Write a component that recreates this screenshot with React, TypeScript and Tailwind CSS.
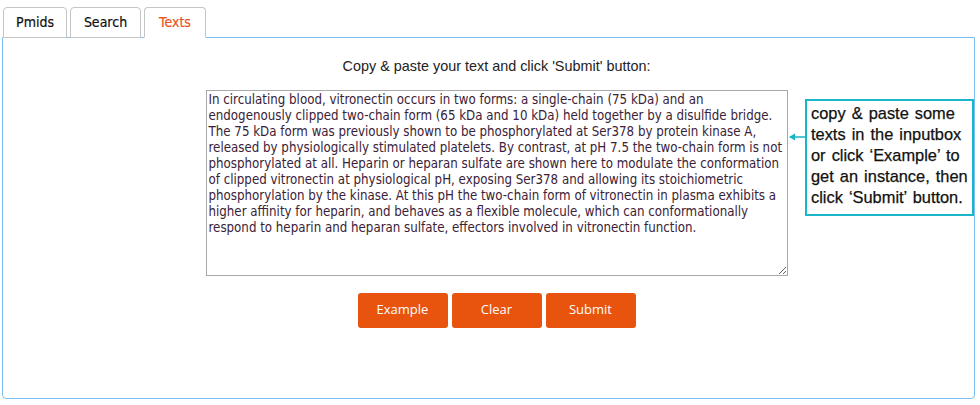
import React from "react";

const sample =
  "In circulating blood, vitronectin occurs in two forms: a single-chain (75 kDa) and an endogenously clipped two-chain form (65 kDa and 10 kDa) held together by a disulfide bridge. The 75 kDa form was previously shown to be phosphorylated at Ser378 by protein kinase A, released by physiologically stimulated platelets. By contrast, at pH 7.5 the two-chain form is not phosphorylated at all. Heparin or heparan sulfate are shown here to modulate the conformation of clipped vitronectin at physiological pH, exposing Ser378 and allowing its stoichiometric phosphorylation by the kinase. At this pH the two-chain form of vitronectin in plasma exhibits a higher affinity for heparin, and behaves as a flexible molecule, which can conformationally respond to heparin and heparan sulfate, effectors involved in vitronectin function.";

const tabs = [
  { label: "Pmids", w: "w-[64px]" },
  { label: "Search", w: "w-[71px]" },
  { label: "Texts", w: "w-[62px]" },
];

const hint = [
  "copy & paste some",
  "texts in the inputbox",
  "or click ‘Example’ to",
  "get an instance, then",
  "click ‘Submit’ button.",
];

export default function App() {
  return (
    <div className="w-[980px] h-[405px] bg-white pl-[2px] pt-[7px] font-['DejaVu_Sans_Condensed',sans-serif]">
      <div className="flex gap-[3px] pl-[1px] relative z-10">
        {tabs.map((t) => (
          <div
            key={t.label}
            className={`${t.w} h-[31px] flex items-center justify-center text-[14px] border border-[#c5c5c5] rounded-t-[4px] bg-white [-webkit-text-stroke:0.2px_currentColor] ${
              t.label === "Texts" ? "text-[#e8541c] border-b-white" : "text-[#111]"
            }`}
          >
            {t.label}
          </div>
        ))}
      </div>
      <div className="relative -mt-[1px] w-[973px] h-[362px] border border-[#7cc0f2] rounded-b-[4px] pl-[16px]">
        <p className="text-center pt-[18px] text-[14.4px] text-[#222] font-['Liberation_Sans',sans-serif]">
          Copy &amp; paste your text and click 'Submit' button:
        </p>
        <div className="flex justify-center mt-[12px]">
          <textarea
            defaultValue={sample}
            className="w-[582px] h-[186px] border border-[#a9a9a9] pl-[2px] pr-0 py-[1px] text-[13.2px] leading-[16px] text-[#3a2238] font-['DejaVu_Sans_Condensed',sans-serif] resize-y outline-none"
          />
        </div>
        <div className="flex justify-center gap-[4px] mt-[17px]">
          {["Example", "Clear", "Submit"].map((b) => (
            <button
              key={b}
              className="w-[90px] h-[35px] bg-[#e8530e] text-white text-[13px] rounded-[3px] font-['Open_Sans',sans-serif]"
            >
              {b}
            </button>
          ))}
        </div>
        <div className="absolute left-[786px] top-[97px] flex items-center">
          <svg width="17" height="8" viewBox="0 0 17 8" className="mt-[-2px]">
            <path d="M1 4H17" stroke="#17b4c4" strokeWidth="1.5" />
            <path d="M0 4L6 0.5V7.5Z" fill="#17b4c4" />
          </svg>
        </div>
        <div className="absolute left-[802px] top-[61px] w-[169px] h-[117px] border-2 border-[#19b6c9] bg-white pl-[4px] pt-[2px] text-[16.4px] leading-[21px] text-[#111] font-['Liberation_Sans',sans-serif] [word-spacing:1.5px]">
          {hint.map((l) => (
            <div key={l} className="whitespace-nowrap [-webkit-text-stroke:0.25px_#111]">
              {l}
            </div>
          ))}
        </div>
      </div>
    </div>
  );
}
